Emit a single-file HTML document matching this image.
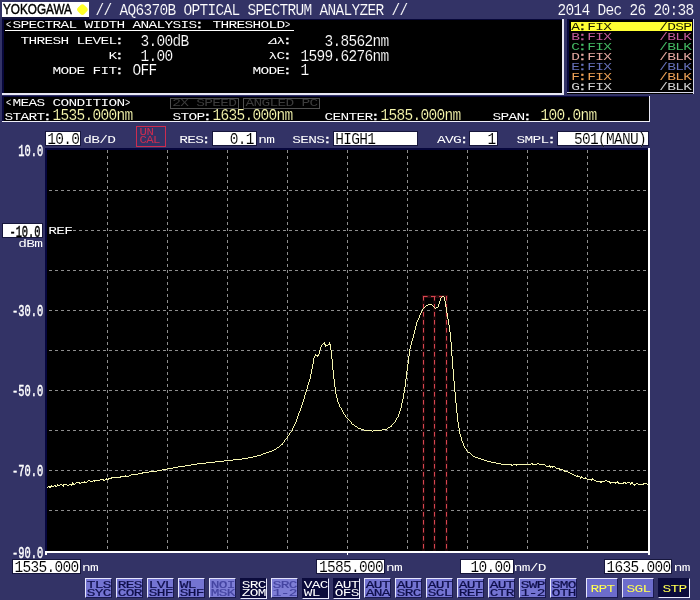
<!DOCTYPE html>
<html><head><meta charset="utf-8"><title>AQ6370B OPTICAL SPECTRUM ANALYZER</title>
<style>
html,body{margin:0;padding:0}
body{width:700px;height:600px;background:#333366;position:relative;overflow:hidden;font-family:"Liberation Mono", monospace}
#w{position:absolute;left:0;top:0;width:700px;height:600px;will-change:transform}
.r{position:absolute}
.x{position:absolute;white-space:pre;line-height:1;transform-origin:0 0;font-family:"Liberation Mono", monospace}
.y{position:absolute;white-space:pre;line-height:1;transform-origin:0 0;font-family:"Liberation Sans", sans-serif}
</style></head><body><div id="w">
<div class="r" style="left:2px;top:16.4px;width:87px;height:2.2px;background:#15153e;"></div>
<div class="r" style="left:2px;top:1.8px;width:87px;height:14.8px;background:#fff;"></div>
<span class="y" style="left:3.0px;top:2.2px;font-size:14.4px;-webkit-text-stroke:0.45px #000;color:#000;transform:scaleX(0.815)">YOKOGAWA</span>
<div class="r" style="left:77.7px;top:4.6px;width:8.8px;height:8.8px;background:#ffff28;border-radius:2.8px;transform:rotate(45deg)"></div>
<span class="x" style="left:95.50px;top:2.21px;font-size:14.5px;letter-spacing:-0.7px;color:#fff;transform:scaleY(1.1517);-webkit-text-stroke:0.12px #333366;">// AQ6370B OPTICAL SPECTRUM ANALYZER //</span>
<span class="x" style="left:557.50px;top:2.21px;font-size:14.5px;letter-spacing:-0.7px;color:#fff;transform:scaleY(1.1517);-webkit-text-stroke:0.12px #333366;">2014 Dec 26 20:38</span>
<div class="r" style="left:2px;top:18.5px;width:561px;height:75.5px;background:#000;"></div>
<div class="r" style="left:2px;top:18.5px;width:560px;height:1.4px;background:#07073a;"></div>
<div class="r" style="left:2px;top:18.5px;width:1.6px;height:75px;background:#07073a;"></div>
<div class="r" style="left:562px;top:18.5px;width:1.5px;height:75.5px;background:#e8e8f4;"></div>
<div class="r" style="left:2px;top:93px;width:561.5px;height:1.5px;background:#e8e8f4;"></div>
<span class="x" style="left:6.40px;top:19.86px;font-size:14.5px;color:#fff;transform:scale(0.6,0.7329)">&lt;</span>
<span class="x" style="left:12.40px;top:19.86px;font-size:14.5px;letter-spacing:-0.7px;color:#fff;transform:scaleY(0.7329);">SPECTRAL WIDTH ANALYSIS<b style="font-weight:normal;position:relative;left:-1.4px;-webkit-text-stroke:0.45px #fff">:</b> THRESHOLD</span>
<span class="x" style="left:285.30px;top:19.86px;font-size:14.5px;color:#fff;transform:scale(0.6,0.7329)">&gt;</span>
<div class="r" style="left:5px;top:30px;width:289px;height:1px;background:#fff;"></div>
<span class="x" style="left:20.40px;top:35.86px;font-size:14.5px;letter-spacing:-0.7px;color:#fff;transform:scaleY(0.7329);">THRESH LEVEL<b style="font-weight:normal;position:relative;left:-1.4px;-webkit-text-stroke:0.45px #fff">:</b></span>
<span class="x" style="left:108.40px;top:50.86px;font-size:14.5px;letter-spacing:-0.7px;color:#fff;transform:scaleY(0.7329);">K<b style="font-weight:normal;position:relative;left:-1.4px;-webkit-text-stroke:0.45px #fff">:</b></span>
<span class="x" style="left:52.40px;top:65.86px;font-size:14.5px;letter-spacing:-0.7px;color:#fff;transform:scaleY(0.7329);">MODE FIT<b style="font-weight:normal;position:relative;left:-1.4px;-webkit-text-stroke:0.45px #fff">:</b></span>
<span class="x" style="left:140.40px;top:34.12px;font-size:14.5px;letter-spacing:-0.7px;color:#fff;transform:scaleY(1.0784);-webkit-text-stroke:0.14px #000;">3.00dB</span>
<span class="x" style="left:140.40px;top:49.12px;font-size:14.5px;letter-spacing:-0.7px;color:#fff;transform:scaleY(1.0784);-webkit-text-stroke:0.14px #000;">1.00</span>
<span class="x" style="left:132.40px;top:63.32px;font-size:14.5px;letter-spacing:-0.7px;color:#fff;transform:scaleY(1.0784);-webkit-text-stroke:0.14px #000;">OFF</span>
<span class="x" style="left:270.70px;top:36.86px;font-size:14.5px;letter-spacing:-0.7px;color:#fff;transform:scaleY(0.7329);transform:skewX(-24deg) scaleY(0.64);">Δ</span>
<span class="x" style="left:276.40px;top:37.64px;font-size:14.5px;color:#fff;transform:scaleY(0.5901)">λ</span>
<span class="x" style="left:284.40px;top:35.86px;font-size:14.5px;letter-spacing:-0.7px;color:#fff;transform:scaleY(0.7329);"><b style="font-weight:normal;position:relative;left:-1.4px;-webkit-text-stroke:0.45px #fff">:</b></span>
<span class="x" style="left:268.40px;top:51.60px;font-size:14.5px;color:#fff;transform:scaleY(0.6662)">λ</span>
<span class="x" style="left:276.40px;top:50.86px;font-size:14.5px;letter-spacing:-0.7px;color:#fff;transform:scaleY(0.7329);">C<b style="font-weight:normal;position:relative;left:-1.4px;-webkit-text-stroke:0.45px #fff">:</b></span>
<span class="x" style="left:252.40px;top:65.86px;font-size:14.5px;letter-spacing:-0.7px;color:#fff;transform:scaleY(0.7329);">MODE<b style="font-weight:normal;position:relative;left:-1.4px;-webkit-text-stroke:0.45px #fff">:</b></span>
<span class="x" style="left:324.40px;top:34.12px;font-size:14.5px;letter-spacing:-0.7px;color:#fff;transform:scaleY(1.0784);-webkit-text-stroke:0.14px #000;">3.8562nm</span>
<span class="x" style="left:300.40px;top:49.12px;font-size:14.5px;letter-spacing:-0.7px;color:#fff;transform:scaleY(1.0784);-webkit-text-stroke:0.14px #000;">1599.6276nm</span>
<span class="x" style="left:300.40px;top:63.32px;font-size:14.5px;letter-spacing:-0.7px;color:#fff;transform:scaleY(1.0784);-webkit-text-stroke:0.14px #000;">1</span>
<div class="r" style="left:567px;top:19px;width:126.5px;height:74.5px;background:#000;"></div>
<div class="r" style="left:567px;top:19px;width:126px;height:1.3px;background:#07073a;"></div>
<div class="r" style="left:567px;top:19px;width:1.5px;height:74px;background:#07073a;"></div>
<div class="r" style="left:692.5px;top:19px;width:1.2px;height:74.5px;background:#d8d8e8;"></div>
<div class="r" style="left:567px;top:92.3px;width:126.5px;height:1.2px;background:#d8d8e8;"></div>
<div class="r" style="left:571px;top:22px;width:121px;height:9px;background:#ffff33;"></div>
<span class="x" style="left:571.30px;top:22.12px;font-size:14.5px;letter-spacing:-0.7px;color:#1a1a00;transform:scaleY(0.6910);">A<b style="font-weight:normal;position:relative;left:-1.4px;-webkit-text-stroke:0.45px #1a1a00">:</b>FIX</span>
<span class="x" style="left:659.30px;top:22.12px;font-size:14.5px;letter-spacing:-0.7px;color:#1a1a00;transform:scaleY(0.6910);">/DSP</span>
<span class="x" style="left:571.30px;top:32.12px;font-size:14.5px;letter-spacing:-0.7px;color:#c45c9c;transform:scaleY(0.6910);">B<b style="font-weight:normal;position:relative;left:-1.4px;-webkit-text-stroke:0.45px #c45c9c">:</b>FIX</span>
<span class="x" style="left:659.30px;top:32.12px;font-size:14.5px;letter-spacing:-0.7px;color:#c45c9c;transform:scaleY(0.6910);">/BLK</span>
<span class="x" style="left:571.30px;top:42.12px;font-size:14.5px;letter-spacing:-0.7px;color:#44bc64;transform:scaleY(0.6910);">C<b style="font-weight:normal;position:relative;left:-1.4px;-webkit-text-stroke:0.45px #44bc64">:</b>FIX</span>
<span class="x" style="left:659.30px;top:42.12px;font-size:14.5px;letter-spacing:-0.7px;color:#44bc64;transform:scaleY(0.6910);">/BLK</span>
<span class="x" style="left:571.30px;top:52.12px;font-size:14.5px;letter-spacing:-0.7px;color:#e6aaa2;transform:scaleY(0.6910);">D<b style="font-weight:normal;position:relative;left:-1.4px;-webkit-text-stroke:0.45px #e6aaa2">:</b>FIX</span>
<span class="x" style="left:659.30px;top:52.12px;font-size:14.5px;letter-spacing:-0.7px;color:#e6aaa2;transform:scaleY(0.6910);">/BLK</span>
<span class="x" style="left:571.30px;top:62.12px;font-size:14.5px;letter-spacing:-0.7px;color:#6672bc;transform:scaleY(0.6910);">E<b style="font-weight:normal;position:relative;left:-1.4px;-webkit-text-stroke:0.45px #6672bc">:</b>FIX</span>
<span class="x" style="left:659.30px;top:62.12px;font-size:14.5px;letter-spacing:-0.7px;color:#6672bc;transform:scaleY(0.6910);">/BLK</span>
<span class="x" style="left:571.30px;top:72.12px;font-size:14.5px;letter-spacing:-0.7px;color:#eea256;transform:scaleY(0.6910);">F<b style="font-weight:normal;position:relative;left:-1.4px;-webkit-text-stroke:0.45px #eea256">:</b>FIX</span>
<span class="x" style="left:659.30px;top:72.12px;font-size:14.5px;letter-spacing:-0.7px;color:#eea256;transform:scaleY(0.6910);">/BLK</span>
<span class="x" style="left:571.30px;top:82.12px;font-size:14.5px;letter-spacing:-0.7px;color:#d4d4d4;transform:scaleY(0.6910);">G<b style="font-weight:normal;position:relative;left:-1.4px;-webkit-text-stroke:0.45px #d4d4d4">:</b>FIX</span>
<span class="x" style="left:659.30px;top:82.12px;font-size:14.5px;letter-spacing:-0.7px;color:#d4d4d4;transform:scaleY(0.6910);">/BLK</span>
<div class="r" style="left:2px;top:95.7px;width:648px;height:26.3px;background:#000;"></div>
<div class="r" style="left:2px;top:95.7px;width:647px;height:1.2px;background:#07073a;"></div>
<div class="r" style="left:2px;top:95.7px;width:1.6px;height:26px;background:#07073a;"></div>
<div class="r" style="left:649px;top:95.5px;width:1.2px;height:26.5px;background:#e8e8f4;"></div>
<div class="r" style="left:2px;top:121px;width:648.2px;height:1.3px;background:#f0f0f8;"></div>
<span class="x" style="left:6.40px;top:98.16px;font-size:14.5px;color:#fff;transform:scale(0.6,0.7329)">&lt;</span>
<span class="x" style="left:12.40px;top:98.16px;font-size:14.5px;letter-spacing:-0.7px;color:#fff;transform:scaleY(0.7329);">MEAS CONDITION</span>
<span class="x" style="left:125.30px;top:98.16px;font-size:14.5px;color:#fff;transform:scale(0.6,0.7329)">&gt;</span>
<div class="r" style="left:169.5px;top:97.5px;width:67px;height:9px;border:1px solid #505050"></div>
<div class="r" style="left:243px;top:97.5px;width:75px;height:9px;border:1px solid #505050"></div>
<span class="x" style="left:172.30px;top:98.22px;font-size:14.5px;letter-spacing:-0.7px;color:#3c3c3c;transform:scaleY(0.6910);">2X SPEED</span>
<span class="x" style="left:245.60px;top:98.22px;font-size:14.5px;letter-spacing:-0.7px;color:#3c3c3c;transform:scaleY(0.6910);">ANGLED PC</span>
<span class="x" style="left:4.40px;top:111.86px;font-size:14.5px;letter-spacing:-0.7px;color:#fff;transform:scaleY(0.7329);">START<b style="font-weight:normal;position:relative;left:-1.4px;-webkit-text-stroke:0.45px #fff">:</b></span>
<span class="x" style="left:52.40px;top:107.67px;font-size:14.5px;letter-spacing:-0.7px;color:#f8f8ae;transform:scaleY(1.1098);-webkit-text-stroke:0.14px #000;">1535.000nm</span>
<span class="x" style="left:172.40px;top:111.86px;font-size:14.5px;letter-spacing:-0.7px;color:#fff;transform:scaleY(0.7329);">STOP<b style="font-weight:normal;position:relative;left:-1.4px;-webkit-text-stroke:0.45px #fff">:</b></span>
<span class="x" style="left:212.40px;top:107.67px;font-size:14.5px;letter-spacing:-0.7px;color:#f8f8ae;transform:scaleY(1.1098);-webkit-text-stroke:0.14px #000;">1635.000nm</span>
<span class="x" style="left:324.40px;top:111.86px;font-size:14.5px;letter-spacing:-0.7px;color:#fff;transform:scaleY(0.7329);">CENTER<b style="font-weight:normal;position:relative;left:-1.4px;-webkit-text-stroke:0.45px #fff">:</b></span>
<span class="x" style="left:380.40px;top:107.67px;font-size:14.5px;letter-spacing:-0.7px;color:#f8f8ae;transform:scaleY(1.1098);-webkit-text-stroke:0.14px #000;">1585.000nm</span>
<span class="x" style="left:492.40px;top:111.86px;font-size:14.5px;letter-spacing:-0.7px;color:#fff;transform:scaleY(0.7329);">SPAN<b style="font-weight:normal;position:relative;left:-1.4px;-webkit-text-stroke:0.45px #fff">:</b></span>
<span class="x" style="left:540.40px;top:107.67px;font-size:14.5px;letter-spacing:-0.7px;color:#f8f8ae;transform:scaleY(1.1098);-webkit-text-stroke:0.14px #000;">100.0nm</span>
<div class="r" style="left:46px;top:132px;width:34px;height:13px;background:#fff;box-shadow:0 0 0 1px #16163c"></div>
<span class="x" style="left:47.30px;top:131.92px;font-size:14.5px;letter-spacing:-0.7px;color:#000;transform:scaleY(1.0784);-webkit-text-stroke:0.1px #fff;">10.0</span>
<span class="x" style="left:83.30px;top:135.16px;font-size:14.5px;letter-spacing:-0.7px;color:#fff;transform:scaleY(0.7329);">dB/D</span>
<div class="r" style="left:136px;top:126px;width:28px;height:19.2px;border:1px solid #cc2c50"></div>
<span class="x" style="left:139.60px;top:127.72px;font-size:12.4px;letter-spacing:-0.5px;color:#cc2c50;transform:scaleY(0.8080);">UN</span>
<span class="x" style="left:139.60px;top:135.92px;font-size:12.4px;letter-spacing:-0.7px;color:#cc2c50;transform:scaleY(0.8080);">CAL</span>
<span class="x" style="left:179.20px;top:135.16px;font-size:14.5px;letter-spacing:-0.7px;color:#fff;transform:scaleY(0.7329);">RES<b style="font-weight:normal;position:relative;left:-1.4px;-webkit-text-stroke:0.45px #fff">:</b></span>
<div class="r" style="left:212.5px;top:132px;width:43.5px;height:13px;background:#fff;box-shadow:0 0 0 1px #16163c"></div>
<span class="x" style="left:229.80px;top:131.92px;font-size:14.5px;letter-spacing:-0.7px;color:#000;transform:scaleY(1.0784);-webkit-text-stroke:0.1px #fff;">0.1</span>
<span class="x" style="left:258.30px;top:135.16px;font-size:14.5px;letter-spacing:-0.7px;color:#fff;transform:scaleY(0.7329);">nm</span>
<span class="x" style="left:292.30px;top:135.16px;font-size:14.5px;letter-spacing:-0.7px;color:#fff;transform:scaleY(0.7329);">SENS<b style="font-weight:normal;position:relative;left:-1.4px;-webkit-text-stroke:0.45px #fff">:</b></span>
<div class="r" style="left:333.5px;top:132px;width:83px;height:13px;background:#fff;box-shadow:0 0 0 1px #16163c"></div>
<span class="x" style="left:335.20px;top:131.92px;font-size:14.5px;letter-spacing:-0.7px;color:#000;transform:scaleY(1.0784);-webkit-text-stroke:0.1px #fff;">HIGH1</span>
<span class="x" style="left:437.00px;top:135.16px;font-size:14.5px;letter-spacing:-0.7px;color:#fff;transform:scaleY(0.7329);">AVG<b style="font-weight:normal;position:relative;left:-1.4px;-webkit-text-stroke:0.45px #fff">:</b></span>
<div class="r" style="left:469.5px;top:132px;width:27px;height:13px;background:#fff;box-shadow:0 0 0 1px #16163c"></div>
<span class="x" style="left:487.50px;top:131.92px;font-size:14.5px;letter-spacing:-0.7px;color:#000;transform:scaleY(1.0784);-webkit-text-stroke:0.1px #fff;">1</span>
<span class="x" style="left:516.50px;top:135.16px;font-size:14.5px;letter-spacing:-0.7px;color:#fff;transform:scaleY(0.7329);">SMPL<b style="font-weight:normal;position:relative;left:-1.4px;-webkit-text-stroke:0.45px #fff">:</b></span>
<div class="r" style="left:557.5px;top:132px;width:90.5px;height:13px;background:#fff;box-shadow:0 0 0 1px #16163c"></div>
<span class="x" style="left:574.00px;top:131.92px;font-size:14.5px;letter-spacing:-0.7px;color:#000;transform:scaleY(1.0784);-webkit-text-stroke:0.1px #fff;">501(MANU)</span>
<div class="r" style="left:45px;top:147.8px;width:2.2px;height:404px;background:#06063c;"></div>
<div class="r" style="left:45px;top:147.8px;width:604px;height:1.9px;background:#06063c;"></div>
<div class="r" style="left:47px;top:149.5px;width:601px;height:401.5px;background:#000;"></div>
<div class="r" style="left:648px;top:148px;width:2px;height:405px;background:#fff;"></div>
<div class="r" style="left:45px;top:551px;width:605px;height:2px;background:#fff;"></div>
<div class="r" style="left:45px;top:553px;width:1.5px;height:1.5px;background:#fff;"></div>
<div class="r" style="left:347px;top:553px;width:1.2px;height:1.6px;background:#fff;"></div>
<div class="r" style="left:648px;top:553px;width:1.5px;height:1.5px;background:#fff;"></div>
<svg class="r" style="left:0;top:0" width="700" height="600" viewBox="0 0 700 600">
<line x1="107.5" y1="150" x2="107.5" y2="551" stroke="#8e8e8e" stroke-width="1" stroke-dasharray="3 3"/>
<line x1="167.5" y1="150" x2="167.5" y2="551" stroke="#8e8e8e" stroke-width="1" stroke-dasharray="3 3"/>
<line x1="227.5" y1="150" x2="227.5" y2="551" stroke="#8e8e8e" stroke-width="1" stroke-dasharray="3 3"/>
<line x1="287.5" y1="150" x2="287.5" y2="551" stroke="#8e8e8e" stroke-width="1" stroke-dasharray="3 3"/>
<line x1="347.5" y1="150" x2="347.5" y2="551" stroke="#8e8e8e" stroke-width="1" stroke-dasharray="3 3"/>
<line x1="407.5" y1="150" x2="407.5" y2="551" stroke="#8e8e8e" stroke-width="1" stroke-dasharray="3 3"/>
<line x1="467.5" y1="150" x2="467.5" y2="551" stroke="#8e8e8e" stroke-width="1" stroke-dasharray="3 3"/>
<line x1="527.5" y1="150" x2="527.5" y2="551" stroke="#8e8e8e" stroke-width="1" stroke-dasharray="3 3"/>
<line x1="587.5" y1="150" x2="587.5" y2="551" stroke="#8e8e8e" stroke-width="1" stroke-dasharray="3 3"/>
<line x1="49" y1="190.5" x2="648" y2="190.5" stroke="#8e8e8e" stroke-width="1" stroke-dasharray="3 3"/>
<line x1="49" y1="230.5" x2="648" y2="230.5" stroke="#8e8e8e" stroke-width="1" stroke-dasharray="3 3"/>
<line x1="49" y1="270.5" x2="648" y2="270.5" stroke="#8e8e8e" stroke-width="1" stroke-dasharray="3 3"/>
<line x1="49" y1="310.5" x2="648" y2="310.5" stroke="#8e8e8e" stroke-width="1" stroke-dasharray="3 3"/>
<line x1="49" y1="350.5" x2="648" y2="350.5" stroke="#8e8e8e" stroke-width="1" stroke-dasharray="3 3"/>
<line x1="49" y1="390.5" x2="648" y2="390.5" stroke="#8e8e8e" stroke-width="1" stroke-dasharray="3 3"/>
<line x1="49" y1="430.5" x2="648" y2="430.5" stroke="#8e8e8e" stroke-width="1" stroke-dasharray="3 3"/>
<line x1="49" y1="470.5" x2="648" y2="470.5" stroke="#8e8e8e" stroke-width="1" stroke-dasharray="3 3"/>
<line x1="49" y1="510.5" x2="648" y2="510.5" stroke="#8e8e8e" stroke-width="1" stroke-dasharray="3 3"/>
<line x1="423.5" y1="296" x2="423.5" y2="551"  stroke="#1a0507" stroke-width="3"/>
<line x1="434.5" y1="296" x2="434.5" y2="551"  stroke="#1a0507" stroke-width="3"/>
<line x1="446.5" y1="296" x2="446.5" y2="551"  stroke="#1a0507" stroke-width="3"/>
<line x1="422" y1="296.5" x2="448" y2="296.5" stroke="#2c0a0c" stroke-width="3"/>
<line x1="423.5" y1="296" x2="423.5" y2="551" stroke="#d84650" stroke-width="1" stroke-dasharray="4.6 3.4"/>
<line x1="434.5" y1="296" x2="434.5" y2="551" stroke="#d84650" stroke-width="1" stroke-dasharray="4.6 3.4"/>
<line x1="446.5" y1="296" x2="446.5" y2="551" stroke="#d84650" stroke-width="1" stroke-dasharray="4.6 3.4"/>
<line x1="423" y1="296.5" x2="447" y2="296.5" stroke="#d84650" stroke-width="1" stroke-dasharray="4.6 3.4"/>
<path d="M47.5 487V488M48.5 486V487M49.5 486V488M50.5 486V488M51.5 485V487M52.5 486V487M53.5 486V487M54.5 485V486M55.5 485V487M56.5 486V487M57.5 484V486M58.5 485V486M59.5 485V486M60.5 484V485M61.5 484V485M62.5 485V486M63.5 484V487M64.5 484V485M65.5 484V485M66.5 484V485M67.5 485V486M68.5 485V486M69.5 484V485M70.5 484V485M71.5 484V486M72.5 482V485M73.5 483V485M74.5 484V485M75.5 483V484M76.5 482V483M77.5 482V483M78.5 482V483M79.5 482V484M80.5 483V484M81.5 482V483M82.5 482V483M83.5 482V483M84.5 481V483M85.5 482V483M86.5 482V483M87.5 481V482M88.5 480V481M89.5 480V481M90.5 481V482M91.5 481V482M92.5 481V482M93.5 480V481M94.5 480V482M95.5 480V481M96.5 480V481M97.5 480V481M98.5 480V481M99.5 480V481M100.5 479V480M101.5 479V480M102.5 479V480M103.5 479V481M104.5 480V481M105.5 479V480M106.5 478V480M107.5 479V480M108.5 478V480M109.5 478V479M110.5 478V479M111.5 477V479M112.5 477V478M113.5 477V478M114.5 477V478M115.5 477V478M116.5 477V478M117.5 477V478M118.5 477V478M119.5 477V478M120.5 476V478M121.5 476V477M122.5 476V477M123.5 476V477M124.5 476V477M125.5 475V477M126.5 476V477M127.5 476V477M128.5 476V477M129.5 475V476M130.5 475V476M131.5 474V475M132.5 474V475M133.5 474V475M134.5 474V475M135.5 474V475M136.5 474V475M137.5 474V475M138.5 473V474M139.5 473V474M140.5 473V474M141.5 473V474M142.5 472V474M143.5 472V473M144.5 472V473M145.5 472V473M146.5 472V473M147.5 472V473M148.5 472V473M149.5 471V472M150.5 471V472M151.5 471V472M152.5 471V472M153.5 471V472M154.5 471V472M155.5 471V472M156.5 471V472M157.5 470V471M158.5 470V471M159.5 470V471M160.5 470V471M161.5 470V471M162.5 469V470M163.5 469V470M164.5 469V470M165.5 469V470M166.5 469V470M167.5 468V469M168.5 468V469M169.5 468V469M170.5 468V469M171.5 468V469M172.5 468V469M173.5 467V468M174.5 467V468M175.5 467V468M176.5 467V468M177.5 467V468M178.5 466V467M179.5 466V467M180.5 466V467M181.5 466V467M182.5 466V467M183.5 466V467M184.5 466V467M185.5 465V466M186.5 465V466M187.5 465V466M188.5 465V466M189.5 465V466M190.5 465V466M191.5 464V465M192.5 464V465M193.5 464V465M194.5 464V465M195.5 464V465M196.5 464V465M197.5 463V464M198.5 463V464M199.5 463V464M200.5 463V464M201.5 463V464M202.5 463V464M203.5 463V464M204.5 463V464M205.5 463V464M206.5 462V463M207.5 462V463M208.5 462V463M209.5 462V463M210.5 462V463M211.5 462V463M212.5 462V463M213.5 462V463M214.5 462V463M215.5 461V462M216.5 461V462M217.5 461V462M218.5 461V462M219.5 461V462M220.5 461V462M221.5 461V462M222.5 461V462M223.5 461V462M224.5 460V461M225.5 460V461M226.5 460V461M227.5 460V461M228.5 460V461M229.5 460V461M230.5 460V461M231.5 460V461M232.5 460V461M233.5 459V460M234.5 459V460M235.5 459V460M236.5 459V460M237.5 459V460M238.5 459V460M239.5 459V460M240.5 459V460M241.5 459V460M242.5 458V459M243.5 458V459M244.5 458V459M245.5 458V459M246.5 458V459M247.5 458V459M248.5 457V458M249.5 457V458M250.5 457V458M251.5 457V458M252.5 457V458M253.5 456V457M254.5 456V457M255.5 456V457M256.5 456V457M257.5 455V456M258.5 455V456M259.5 455V456M260.5 455V456M261.5 454V455M262.5 454V455M263.5 453V454M264.5 453V454M265.5 453V454M266.5 452V453M267.5 452V453M268.5 452V453M269.5 451V452M270.5 451V452M271.5 451V452M272.5 450V451M273.5 450V451M274.5 449V450M275.5 449V450M276.5 448V449M277.5 447V448M278.5 447V448M279.5 446V447M280.5 445V446M281.5 444V445M282.5 443V445M283.5 442V443M284.5 440V442M285.5 439V440M286.5 438V439M287.5 436V438M288.5 435V436M289.5 433V435M290.5 432V433M291.5 431V432M292.5 428V431M293.5 426V428M294.5 424V426M295.5 422V424M296.5 419V422M297.5 416V419M298.5 413V416M299.5 411V413M300.5 408V411M301.5 405V408M302.5 402V405M303.5 399V402M304.5 395V399M305.5 392V395M306.5 389V392M307.5 385V389M308.5 382V385M309.5 379V382M310.5 374V379M311.5 369V374M312.5 364V369M313.5 358V364M314.5 356V358M315.5 354V356M316.5 355V356M317.5 355V357M318.5 354V356M319.5 350V354M320.5 347V350M321.5 345V347M322.5 344V345M323.5 343V344M324.5 342V345M325.5 344V347M326.5 345V346M327.5 345V346M328.5 344V345M329.5 342V345M330.5 344V350M331.5 350V359M332.5 359V370M333.5 370V379M334.5 379V387M335.5 387V394M336.5 394V398M337.5 398V402M338.5 402V404M339.5 404V407M340.5 407V408M341.5 408V410M342.5 410V412M343.5 412V414M344.5 414V415M345.5 415V417M346.5 417V418M347.5 418V419M348.5 419V420M349.5 420V421M350.5 421V422M351.5 422V424M352.5 424V425M353.5 424V425M354.5 425V426M355.5 426V427M356.5 426V427M357.5 427V428M358.5 428V429M359.5 428V429M360.5 428V429M361.5 429V430M362.5 429V430M363.5 429V430M364.5 430V431M365.5 430V431M366.5 430V431M367.5 430V431M368.5 430V431M369.5 430V431M370.5 430V431M371.5 430V431M372.5 431V432M373.5 430V431M374.5 430V431M375.5 430V431M376.5 430V431M377.5 430V431M378.5 430V431M379.5 430V431M380.5 430V431M381.5 430V431M382.5 429V430M383.5 429V430M384.5 429V430M385.5 429V430M386.5 429V430M387.5 428V429M388.5 427V428M389.5 427V428M390.5 426V427M391.5 425V427M392.5 424V425M393.5 423V424M394.5 422V423M395.5 420V422M396.5 418V420M397.5 417V418M398.5 414V417M399.5 411V414M400.5 408V411M401.5 403V408M402.5 399V403M403.5 393V399M404.5 387V393M405.5 379V387M406.5 371V379M407.5 364V371M408.5 356V364M409.5 349V356M410.5 345V349M411.5 341V345M412.5 338V341M413.5 334V338M414.5 330V334M415.5 326V330M416.5 322V326M417.5 320V322M418.5 318V320M419.5 315V318M420.5 313V315M421.5 311V313M422.5 309V311M423.5 308V309M424.5 307V308M425.5 306V307M426.5 305V306M427.5 305V306M428.5 304V305M429.5 304V305M430.5 304V305M431.5 304V305M432.5 305V306M433.5 306V307M434.5 307V308M435.5 308V309M436.5 307V308M437.5 307V308M438.5 304V307M439.5 301V304M440.5 298V301M441.5 297V298M442.5 296V297M443.5 296V297M444.5 297V301M445.5 301V307M446.5 307V313M447.5 313V319M448.5 319V325M449.5 325V332M450.5 332V342M451.5 342V356M452.5 356V369M453.5 369V381M454.5 381V392M455.5 392V403M456.5 403V413M457.5 413V422M458.5 422V428M459.5 428V434M460.5 434V437M461.5 437V441M462.5 441V443M463.5 443V446M464.5 446V448M465.5 448V449M466.5 449V451M467.5 451V452M468.5 452V453M469.5 452V453M470.5 453V454M471.5 454V455M472.5 455V456M473.5 456V457M474.5 456V457M475.5 457V458M476.5 457V458M477.5 457V458M478.5 458V459M479.5 458V459M480.5 458V459M481.5 459V460M482.5 459V460M483.5 459V460M484.5 460V461M485.5 460V461M486.5 460V461M487.5 461V462M488.5 461V462M489.5 461V462M490.5 461V462M491.5 462V463M492.5 462V463M493.5 462V463M494.5 462V463M495.5 462V463M496.5 463V464M497.5 463V464M498.5 463V464M499.5 463V464M500.5 463V464M501.5 464V465M502.5 464V465M503.5 464V465M504.5 464V465M505.5 464V465M506.5 464V465M507.5 464V465M508.5 464V465M509.5 464V465M510.5 464V465M511.5 464V466M512.5 465V466M513.5 464V465M514.5 464V465M515.5 464V465M516.5 464V466M517.5 464V465M518.5 464V465M519.5 464V465M520.5 464V465M521.5 464V465M522.5 464V465M523.5 464V465M524.5 464V465M525.5 464V465M526.5 464V465M527.5 464V465M528.5 464V465M529.5 464V465M530.5 464V465M531.5 463V464M532.5 463V465M533.5 464V465M534.5 464V465M535.5 464V465M536.5 464V465M537.5 463V464M538.5 463V464M539.5 464V465M540.5 464V465M541.5 464V465M542.5 464V465M543.5 464V465M544.5 464V465M545.5 465V466M546.5 466V467M547.5 466V467M548.5 466V467M549.5 465V467M550.5 466V468M551.5 466V467M552.5 466V468M553.5 466V467M554.5 466V467M555.5 467V468M556.5 468V469M557.5 468V469M558.5 468V469M559.5 468V470M560.5 469V470M561.5 469V470M562.5 469V470M563.5 470V471M564.5 470V472M565.5 471V472M566.5 471V472M567.5 471V472M568.5 472V473M569.5 472V473M570.5 473V474M571.5 473V474M572.5 474V475M573.5 474V475M574.5 475V476M575.5 475V476M576.5 476V477M577.5 475V477M578.5 476V477M579.5 476V477M580.5 477V479M581.5 476V478M582.5 477V478M583.5 478V479M584.5 478V479M585.5 477V479M586.5 478V479M587.5 479V480M588.5 479V480M589.5 479V480M590.5 479V480M591.5 479V481M592.5 478V480M593.5 479V480M594.5 480V481M595.5 480V481M596.5 481V482M597.5 481V482M598.5 481V482M599.5 481V482M600.5 481V483M601.5 481V483M602.5 481V482M603.5 481V482M604.5 481V482M605.5 480V481M606.5 480V481M607.5 481V482M608.5 481V482M609.5 481V483M610.5 482V484M611.5 482V483M612.5 482V483M613.5 482V483M614.5 482V483M615.5 482V484M616.5 482V483M617.5 481V483M618.5 482V484M619.5 483V484M620.5 483V484M621.5 483V484M622.5 483V484M623.5 482V484M624.5 482V483M625.5 482V484M626.5 483V484M627.5 482V483M628.5 482V483M629.5 482V483M630.5 483V485M631.5 482V484M632.5 482V484M633.5 484V485M634.5 484V486M635.5 484V485M636.5 483V484M637.5 483V484M638.5 484V485M639.5 484V485M640.5 484V485M641.5 484V485M642.5 484V485M643.5 483V485M644.5 483V484M645.5 483V484M646.5 483V484M647.5 484V485" fill="none" stroke="#f6f6b0" stroke-width="1" shape-rendering="crispEdges"/>
</svg>
<span class="x" style="left:18.24px;top:143.21px;font-size:10.4px;letter-spacing:0.0px;color:#fff;transform:scaleY(1.6057);-webkit-text-stroke:0.3px #fff;">10.0</span>
<span class="x" style="left:12.00px;top:303.21px;font-size:10.4px;letter-spacing:0.0px;color:#fff;transform:scaleY(1.6057);-webkit-text-stroke:0.3px #fff;">-30.0</span>
<span class="x" style="left:12.00px;top:383.21px;font-size:10.4px;letter-spacing:0.0px;color:#fff;transform:scaleY(1.6057);-webkit-text-stroke:0.3px #fff;">-50.0</span>
<span class="x" style="left:12.00px;top:463.21px;font-size:10.4px;letter-spacing:0.0px;color:#fff;transform:scaleY(1.6057);-webkit-text-stroke:0.3px #fff;">-70.0</span>
<span class="x" style="left:12.00px;top:545.01px;font-size:10.4px;letter-spacing:0.0px;color:#fff;transform:scaleY(1.6057);-webkit-text-stroke:0.3px #fff;">-90.0</span>
<div class="r" style="left:3px;top:224px;width:39px;height:13px;background:#fff;box-shadow:0 0 0 1px #16163c"></div>
<span class="x" style="left:9.40px;top:223.54px;font-size:10.4px;letter-spacing:0.0px;color:#000;transform:scaleY(1.5765);-webkit-text-stroke:0.3px #000;">-10.0</span>
<span class="x" style="left:18.20px;top:239.46px;font-size:14.5px;letter-spacing:-0.7px;color:#fff;transform:scaleY(0.7329);">dBm</span>
<div class="r" style="left:47px;top:226px;width:25.5px;height:9px;background:#000;"></div>
<span class="x" style="left:48.30px;top:225.86px;font-size:14.5px;letter-spacing:-0.7px;color:#fff;transform:scaleY(0.7329);">REF</span>
<div class="r" style="left:13px;top:560px;width:66.5px;height:12.8px;background:#fff;box-shadow:0 0 0 1px #16163c"></div>
<span class="x" style="left:14.60px;top:559.62px;font-size:14.5px;letter-spacing:-0.7px;color:#000;transform:scaleY(1.0784);-webkit-text-stroke:0.1px #fff;">1535.000</span>
<span class="x" style="left:81.90px;top:563.06px;font-size:14.5px;letter-spacing:-0.7px;color:#fff;transform:scaleY(0.7329);">nm</span>
<div class="r" style="left:317px;top:560px;width:67px;height:12.8px;background:#fff;box-shadow:0 0 0 1px #16163c"></div>
<span class="x" style="left:319.10px;top:559.62px;font-size:14.5px;letter-spacing:-0.7px;color:#000;transform:scaleY(1.0784);-webkit-text-stroke:0.1px #fff;">1585.000</span>
<span class="x" style="left:385.90px;top:563.06px;font-size:14.5px;letter-spacing:-0.7px;color:#fff;transform:scaleY(0.7329);">nm</span>
<div class="r" style="left:460.5px;top:560px;width:52px;height:12.8px;background:#fff;box-shadow:0 0 0 1px #16163c"></div>
<span class="x" style="left:470.60px;top:559.62px;font-size:14.5px;letter-spacing:-0.7px;color:#000;transform:scaleY(1.0784);-webkit-text-stroke:0.1px #fff;">10.00</span>
<span class="x" style="left:513.70px;top:563.06px;font-size:14.5px;letter-spacing:-0.7px;color:#fff;transform:scaleY(0.7329);">nm/D</span>
<div class="r" style="left:605px;top:560px;width:66px;height:12.8px;background:#fff;box-shadow:0 0 0 1px #16163c"></div>
<span class="x" style="left:606.60px;top:559.62px;font-size:14.5px;letter-spacing:-0.7px;color:#000;transform:scaleY(1.0784);-webkit-text-stroke:0.1px #fff;">1635.000</span>
<span class="x" style="left:673.70px;top:563.06px;font-size:14.5px;letter-spacing:-0.7px;color:#fff;transform:scaleY(0.7329);">nm</span>
<div class="r" style="left:85px;top:578px;width:24.8px;height:18.4px;background:#7474d2;border:1.1px solid;border-color:#e6e6fc #1a1a50 #1a1a50 #e6e6fc"></div>
<span class="x" style="left:86.80px;top:579.71px;font-size:14.5px;letter-spacing:-0.7px;color:#0e0e4a;transform:scaleY(0.7015);-webkit-text-stroke:0.25px #0e0e4a;">TLS</span>
<span class="x" style="left:86.80px;top:588.31px;font-size:14.5px;letter-spacing:-0.7px;color:#0e0e4a;transform:scaleY(0.7015);-webkit-text-stroke:0.25px #0e0e4a;">SYC</span>
<div class="r" style="left:116px;top:578px;width:24.8px;height:18.4px;background:#7474d2;border:1.1px solid;border-color:#e6e6fc #1a1a50 #1a1a50 #e6e6fc"></div>
<span class="x" style="left:117.80px;top:579.71px;font-size:14.5px;letter-spacing:-0.7px;color:#0e0e4a;transform:scaleY(0.7015);-webkit-text-stroke:0.25px #0e0e4a;">RES</span>
<span class="x" style="left:117.80px;top:588.31px;font-size:14.5px;letter-spacing:-0.7px;color:#0e0e4a;transform:scaleY(0.7015);-webkit-text-stroke:0.25px #0e0e4a;">COR</span>
<div class="r" style="left:147px;top:578px;width:24.8px;height:18.4px;background:#7474d2;border:1.1px solid;border-color:#e6e6fc #1a1a50 #1a1a50 #e6e6fc"></div>
<span class="x" style="left:148.80px;top:579.71px;font-size:14.5px;letter-spacing:-0.7px;color:#0e0e4a;transform:scaleY(0.7015);-webkit-text-stroke:0.25px #0e0e4a;">LVL</span>
<span class="x" style="left:148.80px;top:588.31px;font-size:14.5px;letter-spacing:-0.7px;color:#0e0e4a;transform:scaleY(0.7015);-webkit-text-stroke:0.25px #0e0e4a;">SHF</span>
<div class="r" style="left:178px;top:578px;width:24.8px;height:18.4px;background:#7474d2;border:1.1px solid;border-color:#e6e6fc #1a1a50 #1a1a50 #e6e6fc"></div>
<span class="x" style="left:179.80px;top:579.71px;font-size:14.5px;letter-spacing:-0.7px;color:#0e0e4a;transform:scaleY(0.7015);-webkit-text-stroke:0.25px #0e0e4a;">WL</span>
<span class="x" style="left:179.80px;top:588.31px;font-size:14.5px;letter-spacing:-0.7px;color:#0e0e4a;transform:scaleY(0.7015);-webkit-text-stroke:0.25px #0e0e4a;">SHF</span>
<div class="r" style="left:209px;top:578px;width:24.8px;height:18.4px;background:#7e7ed6;border:1.1px solid;border-color:#e2e2fa #1c1c52 #1c1c52 #e2e2fa"></div>
<span class="x" style="left:210.80px;top:579.71px;font-size:14.5px;letter-spacing:-0.7px;color:#4444a0;transform:scaleY(0.7015);-webkit-text-stroke:0.25px #4444a0;">NOI</span>
<span class="x" style="left:210.80px;top:588.31px;font-size:14.5px;letter-spacing:-0.7px;color:#4444a0;transform:scaleY(0.7015);-webkit-text-stroke:0.25px #4444a0;">MSK</span>
<div class="r" style="left:240px;top:578px;width:24.8px;height:18.9px;background:#0b0b3c;border:1.1px solid;border-color:#0b0b3c #ececff #ececff #0b0b3c"></div>
<span class="x" style="left:241.80px;top:579.71px;font-size:14.5px;letter-spacing:-0.7px;color:#fff;transform:scaleY(0.7015);">SRC</span>
<span class="x" style="left:241.80px;top:588.31px;font-size:14.5px;letter-spacing:-0.7px;color:#fff;transform:scaleY(0.7015);">ZOM</span>
<div class="r" style="left:271px;top:578px;width:24.8px;height:18.4px;background:#7e7ed6;border:1.1px solid;border-color:#e2e2fa #1c1c52 #1c1c52 #e2e2fa"></div>
<span class="x" style="left:272.80px;top:579.71px;font-size:14.5px;letter-spacing:-0.7px;color:#4444a0;transform:scaleY(0.7015);-webkit-text-stroke:0.25px #4444a0;">SRC</span>
<span class="x" style="left:272.80px;top:588.31px;font-size:14.5px;letter-spacing:-0.7px;color:#4444a0;transform:scaleY(0.7015);-webkit-text-stroke:0.25px #4444a0;">1-2</span>
<div class="r" style="left:302px;top:578px;width:24.8px;height:18.9px;background:#0b0b3c;border:1.1px solid;border-color:#0b0b3c #ececff #ececff #0b0b3c"></div>
<span class="x" style="left:303.80px;top:579.71px;font-size:14.5px;letter-spacing:-0.7px;color:#fff;transform:scaleY(0.7015);">VAC</span>
<span class="x" style="left:303.80px;top:588.31px;font-size:14.5px;letter-spacing:-0.7px;color:#fff;transform:scaleY(0.7015);">WL</span>
<div class="r" style="left:333px;top:578px;width:24.8px;height:18.9px;background:#0b0b3c;border:1.1px solid;border-color:#0b0b3c #ececff #ececff #0b0b3c"></div>
<span class="x" style="left:334.80px;top:579.71px;font-size:14.5px;letter-spacing:-0.7px;color:#fff;transform:scaleY(0.7015);">AUT</span>
<span class="x" style="left:334.80px;top:588.31px;font-size:14.5px;letter-spacing:-0.7px;color:#fff;transform:scaleY(0.7015);">OFS</span>
<div class="r" style="left:364px;top:578px;width:24.8px;height:18.4px;background:#7474d2;border:1.1px solid;border-color:#e6e6fc #1a1a50 #1a1a50 #e6e6fc"></div>
<span class="x" style="left:365.80px;top:579.71px;font-size:14.5px;letter-spacing:-0.7px;color:#0e0e4a;transform:scaleY(0.7015);-webkit-text-stroke:0.25px #0e0e4a;">AUT</span>
<span class="x" style="left:365.80px;top:588.31px;font-size:14.5px;letter-spacing:-0.7px;color:#0e0e4a;transform:scaleY(0.7015);-webkit-text-stroke:0.25px #0e0e4a;">ANA</span>
<div class="r" style="left:395px;top:578px;width:24.8px;height:18.4px;background:#7474d2;border:1.1px solid;border-color:#e6e6fc #1a1a50 #1a1a50 #e6e6fc"></div>
<span class="x" style="left:396.80px;top:579.71px;font-size:14.5px;letter-spacing:-0.7px;color:#0e0e4a;transform:scaleY(0.7015);-webkit-text-stroke:0.25px #0e0e4a;">AUT</span>
<span class="x" style="left:396.80px;top:588.31px;font-size:14.5px;letter-spacing:-0.7px;color:#0e0e4a;transform:scaleY(0.7015);-webkit-text-stroke:0.25px #0e0e4a;">SRC</span>
<div class="r" style="left:426px;top:578px;width:24.8px;height:18.4px;background:#7474d2;border:1.1px solid;border-color:#e6e6fc #1a1a50 #1a1a50 #e6e6fc"></div>
<span class="x" style="left:427.80px;top:579.71px;font-size:14.5px;letter-spacing:-0.7px;color:#0e0e4a;transform:scaleY(0.7015);-webkit-text-stroke:0.25px #0e0e4a;">AUT</span>
<span class="x" style="left:427.80px;top:588.31px;font-size:14.5px;letter-spacing:-0.7px;color:#0e0e4a;transform:scaleY(0.7015);-webkit-text-stroke:0.25px #0e0e4a;">SCL</span>
<div class="r" style="left:457px;top:578px;width:24.8px;height:18.4px;background:#7474d2;border:1.1px solid;border-color:#e6e6fc #1a1a50 #1a1a50 #e6e6fc"></div>
<span class="x" style="left:458.80px;top:579.71px;font-size:14.5px;letter-spacing:-0.7px;color:#0e0e4a;transform:scaleY(0.7015);-webkit-text-stroke:0.25px #0e0e4a;">AUT</span>
<span class="x" style="left:458.80px;top:588.31px;font-size:14.5px;letter-spacing:-0.7px;color:#0e0e4a;transform:scaleY(0.7015);-webkit-text-stroke:0.25px #0e0e4a;">REF</span>
<div class="r" style="left:488px;top:578px;width:24.8px;height:18.4px;background:#7474d2;border:1.1px solid;border-color:#e6e6fc #1a1a50 #1a1a50 #e6e6fc"></div>
<span class="x" style="left:489.80px;top:579.71px;font-size:14.5px;letter-spacing:-0.7px;color:#0e0e4a;transform:scaleY(0.7015);-webkit-text-stroke:0.25px #0e0e4a;">AUT</span>
<span class="x" style="left:489.80px;top:588.31px;font-size:14.5px;letter-spacing:-0.7px;color:#0e0e4a;transform:scaleY(0.7015);-webkit-text-stroke:0.25px #0e0e4a;">CTR</span>
<div class="r" style="left:519px;top:578px;width:24.8px;height:18.4px;background:#7474d2;border:1.1px solid;border-color:#e6e6fc #1a1a50 #1a1a50 #e6e6fc"></div>
<span class="x" style="left:520.80px;top:579.71px;font-size:14.5px;letter-spacing:-0.7px;color:#0e0e4a;transform:scaleY(0.7015);-webkit-text-stroke:0.25px #0e0e4a;">SWP</span>
<span class="x" style="left:520.80px;top:588.31px;font-size:14.5px;letter-spacing:-0.7px;color:#0e0e4a;transform:scaleY(0.7015);-webkit-text-stroke:0.25px #0e0e4a;">1-2</span>
<div class="r" style="left:550px;top:578px;width:24.8px;height:18.4px;background:#7474d2;border:1.1px solid;border-color:#e6e6fc #1a1a50 #1a1a50 #e6e6fc"></div>
<span class="x" style="left:551.80px;top:579.71px;font-size:14.5px;letter-spacing:-0.7px;color:#0e0e4a;transform:scaleY(0.7015);-webkit-text-stroke:0.25px #0e0e4a;">SMO</span>
<span class="x" style="left:551.80px;top:588.31px;font-size:14.5px;letter-spacing:-0.7px;color:#0e0e4a;transform:scaleY(0.7015);-webkit-text-stroke:0.25px #0e0e4a;">OTH</span>
<div class="r" style="left:586px;top:578px;width:29.6px;height:18.2px;background:#6c6ccc;border:1.2px solid;border-color:#e6e6fc #1a1a50 #1a1a50 #e6e6fc"></div>
<span class="x" style="left:590.60px;top:584.09px;font-size:14.5px;letter-spacing:-0.7px;color:#ffff50;transform:scaleY(0.7120);">RPT</span>
<div class="r" style="left:622px;top:578px;width:29.6px;height:18.2px;background:#6c6ccc;border:1.2px solid;border-color:#e6e6fc #1a1a50 #1a1a50 #e6e6fc"></div>
<span class="x" style="left:626.60px;top:584.09px;font-size:14.5px;letter-spacing:-0.7px;color:#ffff50;transform:scaleY(0.7120);">SGL</span>
<div class="r" style="left:658px;top:578px;width:29.6px;height:18.2px;background:#0b0b3c;border:1.2px solid;border-color:#0b0b3c #ececff #ececff #0b0b3c"></div>
<span class="x" style="left:662.60px;top:584.09px;font-size:14.5px;letter-spacing:-0.7px;color:#ffff50;transform:scaleY(0.7120);">STP</span>
</div></body></html>
